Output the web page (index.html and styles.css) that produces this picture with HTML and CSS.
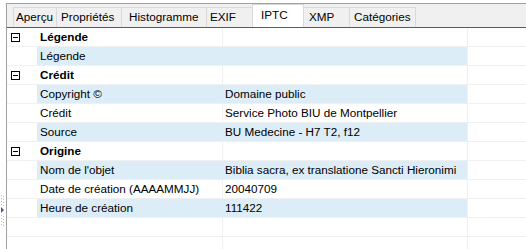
FILE: index.html
```html
<!DOCTYPE html>
<html lang="fr">
<head>
    <meta charset="UTF-8" />
    <title>Propriétés IPTC</title>
    <link rel="stylesheet" href="styles.css">
</head>
<body>
    <div class="window">
        <div class="splitter">
            <svg class="grip" width="6" height="32" viewBox="0 0 6 32">
                <g fill="#a9bfe0">
                    <rect x="1" y="1" width="1" height="1"/><rect x="3" y="2" width="1" height="1"/>
                    <rect x="1" y="4" width="1" height="1"/><rect x="3" y="5" width="1" height="1"/>
                    <rect x="1" y="7" width="1" height="1"/><rect x="3" y="8" width="1" height="1"/>
                    <rect x="1" y="10" width="1" height="1"/><rect x="3" y="11" width="1" height="1"/>
                    <rect x="1" y="21" width="1" height="1"/><rect x="3" y="22" width="1" height="1"/>
                    <rect x="1" y="24" width="1" height="1"/><rect x="3" y="25" width="1" height="1"/>
                    <rect x="1" y="27" width="1" height="1"/><rect x="3" y="28" width="1" height="1"/>
                    <rect x="1" y="30" width="1" height="1"/><rect x="3" y="31" width="1" height="1"/>
                </g>
                <path d="M1 13 L4 16 L1 19 Z" fill="#4a5f80"/>
            </svg>
        </div>

        <div class="panel">
            <div class="tabs">
                <div class="tab tab-apercu">Aperçu</div>
                <div class="tab tab-props">Propriétés</div>
                <div class="tab tab-histo">Histogramme</div>
                <div class="tab tab-exif">EXIF</div>
                <div class="tab tab-iptc active">IPTC</div>
                <div class="tab tab-xmp">XMP</div>
                <div class="tab tab-cat">Catégories</div>
            </div>

            <div class="grid">
                <div class="row group">
                    <div class="cell toggle"><span class="box"></span></div>
                    <div class="cell name">Légende</div>
                    <div class="cell value"></div>
                    <div class="cell rest"></div>
                </div>
                <div class="row item">
                    <div class="cell toggle"></div>
                    <div class="cell name">Légende</div>
                    <div class="cell value"></div>
                    <div class="cell rest"></div>
                </div>

                <div class="row group">
                    <div class="cell toggle"><span class="box"></span></div>
                    <div class="cell name">Crédit</div>
                    <div class="cell value"></div>
                    <div class="cell rest"></div>
                </div>
                <div class="row item">
                    <div class="cell toggle"></div>
                    <div class="cell name">Copyright ©</div>
                    <div class="cell value">Domaine public</div>
                    <div class="cell rest"></div>
                </div>
                <div class="row item odd">
                    <div class="cell toggle"></div>
                    <div class="cell name">Crédit</div>
                    <div class="cell value">Service Photo BIU de Montpellier</div>
                    <div class="cell rest"></div>
                </div>
                <div class="row item">
                    <div class="cell toggle"></div>
                    <div class="cell name">Source</div>
                    <div class="cell value">BU Medecine - H7 T2, f12</div>
                    <div class="cell rest"></div>
                </div>

                <div class="row group">
                    <div class="cell toggle"><span class="box"></span></div>
                    <div class="cell name">Origine</div>
                    <div class="cell value"></div>
                    <div class="cell rest"></div>
                </div>
                <div class="row item">
                    <div class="cell toggle"></div>
                    <div class="cell name">Nom de l'objet</div>
                    <div class="cell value">Biblia sacra, ex translatione Sancti Hieronimi</div>
                    <div class="cell rest"></div>
                </div>
                <div class="row item odd">
                    <div class="cell toggle"></div>
                    <div class="cell name">Date de création (AAAAMMJJ)</div>
                    <div class="cell value">20040709</div>
                    <div class="cell rest"></div>
                </div>
                <div class="row item">
                    <div class="cell toggle"></div>
                    <div class="cell name">Heure de création</div>
                    <div class="cell value">111422</div>
                    <div class="cell rest"></div>
                </div>

                <div class="row empty">
                    <div class="cell toggle"></div>
                    <div class="cell name"></div>
                    <div class="cell value"></div>
                    <div class="cell rest"></div>
                </div>
                <div class="row empty">
                    <div class="cell toggle"></div>
                    <div class="cell name"></div>
                    <div class="cell value"></div>
                    <div class="cell rest"></div>
                </div>
            </div>
        </div>
    </div>
</body>
</html>
```

FILE: styles.css
```css
html,
body {
    margin: 0;
    padding: 0;
    background: #ffffff;
    overflow: hidden;
    font-family: 'Liberation Sans', Arial, sans-serif;
    font-size: 11.7px;
    color: #000;
}
.window {
    width: 526px;
    height: 249px;
    display: flex;
}
.splitter {
    width: 6px;
    flex: none;
    display: flex;
    flex-direction: column;
    padding-top: 194px;
    box-sizing: border-box;
}
.grip { display: block; }
.panel {
    flex: 1;
    margin-top: 3px;
    border-top: 1px solid #a0a0a0;
    border-left: 1px solid #a0a0a0;
    display: flex;
    flex-direction: column;
    overflow: hidden;
}
/* onglets */
.tabs {
    height: 23px;
    flex: none;
    background: #f0f0f0;
    border-bottom: 1px solid #5c5c5c;
    display: flex;
    align-items: flex-end;
    padding-left: 6px;
}
.tab {
    height: 20px;
    box-sizing: border-box;
    border-top: 1px solid #d9d9d9;
    border-right: 1px solid #d9d9d9;
    background: #f0f0f0;
    line-height: 18px;
    padding-left: 3px;
    white-space: nowrap;
    overflow: hidden;
}
.tab-apercu { width: 44px; padding-left: 2px; border-left: 1px solid #d9d9d9; }
.tab-props { width: 65px; padding-left: 4px; }
.tab-histo { width: 85px; padding-left: 7px; }
.tab-exif { width: 46px; }
.tab-iptc { width: 52px; }
.tab-xmp { width: 46px; padding-left: 5px; }
.tab-cat { width: 66px; padding-left: 4px; }
.tab.active {
    height: 23px;
    background: #ffffff;
    border-left: 1px solid #d9d9d9;
    margin-left: -1px;
    line-height: 20px;
    padding-left: 8px;
}
/* grille */
.grid {
    flex: 1;
    overflow: hidden;
}
.row {
    display: grid;
    grid-template-columns: 30px 185px 245px 1fr;
    height: 19px;
}
.cell {
    box-sizing: border-box;
    border-bottom: 1px solid #f0f0f0;
    line-height: 18px;
    white-space: nowrap;
    overflow: hidden;
}
.name { padding-left: 3px; }
.value { border-left: 1px solid #f0f0f0; padding-left: 2px; }
.rest { border-left: 1px solid #f0f0f0; }
.group .name { font-weight: bold; }
.item .name,
.item .value { background: #ddedf7; }
.item .value { border-left-color: #ddedf7; }
.item.odd .name,
.item.odd .value { background: #ffffff; }
.item.odd .value { border-left-color: #f0f0f0; }
.toggle {
    display: flex;
    align-items: center;
}
.box {
    width: 9px;
    height: 9px;
    margin-left: 4px;
    box-sizing: border-box;
    border: 1px solid #000;
    position: relative;
}
.box::after {
    content: '';
    position: absolute;
    left: 1px;
    top: 3px;
    width: 5px;
    height: 1px;
    background: #000;
}
```
